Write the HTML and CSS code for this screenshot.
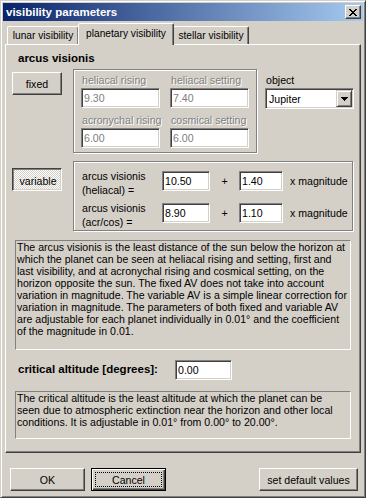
FILE: index.html
```html
<!DOCTYPE html>
<html lang="en">
<head>
<meta charset="UTF-8">
<title>visibility parameters</title>
<link rel="stylesheet" href="styles.css">
</head>
<body>

<div class="window">
    <div class="titlebar">
        <span class="title">visibility parameters</span>
        <button class="close" type="button">
            <svg width="8" height="7" viewBox="0 0 8 7" shape-rendering="crispEdges"><path d="M0 0h2v1H0zM6 0h2v1H6zM1 1h2v1H1zM5 1h2v1H5zM2 2h4v1H2zM3 3h2v1H3zM2 4h4v1H2zM1 5h2v1H1zM5 5h2v1H5zM0 6h2v1H0zM6 6h2v1H6z"/></svg>
        </button>
    </div>

    <div class="client">
        <div class="tabs">
            <div class="tab tab-lunar">lunar visibility</div>
            <div class="tab tab-planet active">planetary visibility</div>
            <div class="tab tab-stellar">stellar visibility</div>
        </div>

        <div class="panel">
            <div class="heading">arcus visionis</div>

            <div class="row row-fixed">
                <button class="btn mode" type="button">fixed</button>
                <div class="group fixed-group">
                    <div class="cell">
                        <label class="off">heliacal rising</label>
                        <input class="field off" type="text" value="9.30" disabled>
                    </div>
                    <div class="cell">
                        <label class="off">heliacal setting</label>
                        <input class="field off" type="text" value="7.40" disabled>
                    </div>
                    <div class="cell">
                        <label class="off">acronychal rising</label>
                        <input class="field off" type="text" value="6.00" disabled>
                    </div>
                    <div class="cell">
                        <label class="off">cosmical setting</label>
                        <input class="field off" type="text" value="6.00" disabled>
                    </div>
                </div>
                <div class="object">
                    <label>object</label>
                    <div class="select">
                        <span class="select-value">Jupiter</span>
                        <span class="drop">
                            <svg width="7" height="4" viewBox="0 0 7 4" shape-rendering="crispEdges"><path d="M0 0h7v1H6v1H5v1H4v1H3V3H2V2H1V1H0z"/></svg>
                        </span>
                    </div>
                </div>
            </div>

            <div class="row row-variable">
                <button class="btn mode pressed" type="button">variable</button>
                <div class="group variable-group">
                    <div class="av-label">arcus visionis<br>(heliacal) =</div>
                    <input class="field" type="text" value="10.50">
                    <div class="plus">+</div>
                    <input class="field" type="text" value="1.40">
                    <div class="mag">x magnitude</div>

                    <div class="av-label">arcus visionis<br>(acr/cos) =</div>
                    <input class="field" type="text" value="8.90">
                    <div class="plus">+</div>
                    <input class="field" type="text" value="1.10">
                    <div class="mag">x magnitude</div>
                </div>
            </div>

            <div class="note note-av">
                The arcus visionis is the least distance of the sun below the horizon at<br>
                which the planet can be seen at heliacal rising and setting, first and<br>
                last visibility, and at acronychal rising and cosmical setting, on the<br>
                horizon opposite the sun. The fixed AV does not take into account<br>
                variation in magnitude. The variable AV is a simple linear correction for<br>
                variation in magnitude. The parameters of both fixed and variable AV<br>
                are adjustable for each planet individually in 0.01&deg; and the coefficient<br>
                of the magnitude in 0.01.
            </div>

            <div class="crit">
                <span class="crit-label">critical altitude [degrees]:</span>
                <input class="field crit-field" type="text" value="0.00">
            </div>

            <div class="note note-crit">
                The critical altitude is the least altitude at which the planet can be<br>
                seen due to atmospheric extinction near the horizon and other local<br>
                conditions. It is adjustable in 0.01&deg; from 0.00&deg; to 20.00&deg;.
            </div>
        </div>

        <div class="actions">
            <button class="btn act" type="button">OK</button>
            <button class="btn act default" type="button">Cancel</button>
            <button class="btn act reset" type="button">set default values</button>
        </div>
    </div>
</div>

</body>
</html>
```

FILE: styles.css
```css
* {
    box-sizing: border-box;
}
body {
    margin: 0;
    background: #d4d0c8;
    font-family: "Liberation Sans", Arial, sans-serif;
    font-size: 10.6px;
    color: #000;
}
button, input {
    font-family: inherit;
    font-size: inherit;
    color: inherit;
}

/* window frame */
.window {
    width: 366px;
    height: 498px;
    background: #d4d0c8;
    border: 1px solid;
    border-color: #d4d0c8 #404040 #404040 #d4d0c8;
    box-shadow: inset 1px 1px #fff, inset -1px -1px #808080;
    padding: 2px;
}
.titlebar {
    height: 18px;
    display: flex;
    align-items: center;
    justify-content: space-between;
    padding: 0 2px 0 3px;
    background: linear-gradient(to right, #0a246a, #a6caf0);
}
.title {
    color: #fff;
    font-weight: bold;
    font-size: 11.5px;
}
.close {
    width: 16px;
    height: 14px;
    padding: 0;
    display: flex;
    align-items: center;
    justify-content: center;
    background: #d4d0c8;
    border: 1px solid;
    border-color: #fff #404040 #404040 #fff;
    box-shadow: inset -1px -1px #808080;
}

.client {
    padding: 2px 2px 0 2px;
}

/* tabs */
.tabs {
    display: flex;
    align-items: flex-end;
    height: 21px;
    padding-left: 2px;
    font-size: 10.2px;
}
.tab {
    position: relative;
    height: 18px;
    line-height: 17px;
    text-align: center;
    white-space: nowrap;
    border: 1px solid;
    border-bottom: none;
    border-color: #fff #404040 transparent #fff;
    border-radius: 2px 2px 0 0;
    box-shadow: inset -1px 0 #808080;
}
.tab-lunar { width: 72px; }
.tab-planet { width: 96px; }
.tab-stellar { width: 76px; }
.tab.active {
    height: 22px;
    line-height: 19px;
    margin: 0 -1px -1px -1px;
    background: #d4d0c8;
    z-index: 1;
}

.panel {
    height: 409px;
    border: 1px solid;
    border-color: #fff #404040 #404040 #fff;
    box-shadow: inset -1px -1px #808080;
    padding: 0 6px;
}
.heading {
    margin: 6px 0 0 6px;
    line-height: 14px;
    font-weight: bold;
    font-size: 11.5px;
}

/* shared controls */
.btn {
    height: 23px;
    padding: 0;
    background: #d4d0c8;
    border: 1px solid;
    border-color: #fff #404040 #404040 #fff;
    box-shadow: inset -1px -1px #808080;
}
.btn.pressed {
    border-color: #404040 #fff #fff #404040;
    box-shadow: inset 1px 1px #808080, inset -1px -1px #d4d0c8;
    background: repeating-conic-gradient(#fff 0 25%, #d4d0c8 0 50%) 0 0 / 2px 2px;
    padding: 2px 0 0 2px;
}
.field {
    height: 20px;
    padding: 0 0 0 2px;
    background: #fff;
    border: 1px solid;
    border-color: #808080 #fff #fff #808080;
    box-shadow: inset 1px 1px #404040, inset -1px -1px #d4d0c8;
    outline: none;
}
.field.off {
    color: #808080;
    -webkit-text-fill-color: #808080;
}
label.off {
    color: #808080;
    text-shadow: 1px 1px #fff;
}
.group {
    border: 1px solid #808080;
    box-shadow: 1px 1px #fff, inset 1px 1px #fff;
}

.row {
    display: flex;
    align-items: flex-start;
}
.mode {
    width: 50px;
    margin-right: 11px;
}

/* fixed arcus visionis */
.row-fixed {
    margin-top: 4px;
}
.row-fixed .mode {
    margin-top: 3px;
}
.fixed-group {
    width: 184px;
    display: grid;
    grid-template-columns: 79px 79px;
    column-gap: 10px;
    row-gap: 5px;
    padding: 3px 0 4px 7px;
}
.cell label {
    display: block;
    line-height: 14px;
    padding-left: 1px;
    margin-bottom: 1px;
    white-space: nowrap;
}
.cell .field {
    width: 79px;
}
.object {
    margin: 4px 0 0 8px;
}
.object label {
    display: block;
    line-height: 14px;
    padding-left: 1px;
    margin-bottom: 1px;
}
.select {
    width: 89px;
    height: 21px;
    display: flex;
    align-items: center;
    padding: 1px;
    background: #fff;
    border: 1px solid;
    border-color: #808080 #fff #fff #808080;
    box-shadow: inset 1px 1px #404040, inset -1px -1px #d4d0c8;
}
.select-value {
    padding-left: 2px;
}
.drop {
    margin-left: auto;
    width: 16px;
    height: 17px;
    display: flex;
    align-items: center;
    justify-content: center;
    background: #d4d0c8;
    border: 1px solid;
    border-color: #d4d0c8 #404040 #404040 #d4d0c8;
    box-shadow: inset 1px 1px #fff, inset -1px -1px #808080;
}

/* variable arcus visionis */
.row-variable {
    margin-top: 8px;
}
.row-variable .mode {
    margin-top: 7px;
}
.variable-group {
    width: 280px;
    display: grid;
    grid-template-columns: 80px 48px 29px 44px auto;
    row-gap: 4px;
    padding: 7px 0 1px 8px;
}
.av-label {
    line-height: 14px;
    white-space: nowrap;
}
.variable-group .field {
    width: 100%;
    margin-top: 2px;
}
.plus, .mag {
    margin-top: 2px;
    line-height: 20px;
}
.plus {
    text-align: center;
}
.mag {
    padding-left: 7px;
    white-space: nowrap;
}

/* notes */
.note {
    width: 336px;
    margin-left: 3px;
    padding-left: 1px;
    line-height: 12px;
    white-space: nowrap;
    border: 1px solid;
    border-color: #808080 #fff #fff #808080;
}
.note-av {
    margin-top: 9px;
    height: 110px;
}
.note-crit {
    margin-top: 11px;
    height: 48px;
}
.crit {
    display: flex;
    align-items: center;
    margin-top: 10px;
}
.crit-label {
    width: 157px;
    margin: 0 0 2px 6px;
    font-weight: bold;
    font-size: 11.5px;
}
.crit-field {
    width: 57px;
}

/* dialog buttons */
.actions {
    display: flex;
    margin-top: 15px;
    padding: 0 3px 0 5px;
}
.act {
    width: 75px;
}
.act.default {
    position: relative;
    margin-left: 6px;
    border-color: #000;
    box-shadow: inset 1px 1px #fff, inset -1px -1px #404040, inset -2px -2px #808080;
}
.act.default::after {
    content: "";
    position: absolute;
    inset: 3px;
    border: 1px dotted #000;
}
.act.reset {
    width: 99px;
    margin-left: auto;
}
```
